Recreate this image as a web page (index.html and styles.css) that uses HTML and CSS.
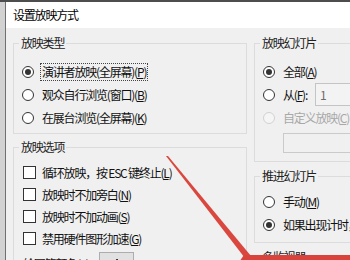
FILE: index.html
```html
<!DOCTYPE html>
<html lang="zh-CN">
<head>
  <meta charset="UTF-8" />
  <title>设置放映方式</title>
  <link rel="stylesheet" href="styles.css">
</head>
<body>
<div class="screen">
  <div class="topline"></div>
  <div class="desk">
    <div class="behind"></div>
    <div class="dialog">
      <div class="titlebar">设置放映方式</div>
      <div class="panel">

        <!-- left column -->
        <div class="col">
          <fieldset class="group g-type">
            <legend>放映类型</legend>
            <div class="opt"><span class="radio on"></span><span class="focus">演讲者放映(全屏幕)(<u>P</u>)</span></div>
            <div class="opt"><span class="radio"></span>观众自行浏览(窗口)(<u>B</u>)</div>
            <div class="opt"><span class="radio"></span>在展台浏览(全屏幕)(<u>K</u>)</div>
          </fieldset>

          <fieldset class="group g-options">
            <legend>放映选项</legend>
            <div class="opt"><span class="check"></span>循环放映，按 ESC 键终止(<u>L</u>)</div>
            <div class="opt"><span class="check"></span>放映时不加旁白(<u>N</u>)</div>
            <div class="opt"><span class="check"></span>放映时不加动画(<u>S</u>)</div>
            <div class="opt"><span class="check"></span>禁用硬件图形加速(<u>G</u>)</div>
            <div class="pen-row">
              <span>绘图笔颜色(<u>E</u>):</span>
              <button class="color-btn" type="button">
                <svg width="14" height="12" viewBox="0 0 14 12">
                  <path d="M3 8 L8 2 L10 4 L5 10 Z" fill="none" stroke="#333" stroke-width="1"/>
                  <path d="M10 9 L13 9 L11.5 11 Z" fill="#333"/>
                </svg>
              </button>
            </div>
          </fieldset>
        </div>

        <!-- right column -->
        <div class="col">
          <fieldset class="group g-slides">
            <legend>放映幻灯片</legend>
            <div class="opt"><span class="radio on"></span>全部(<u>A</u>)</div>
            <div class="opt"><span class="radio"></span>从(<u>F</u>):<span class="num-box">1</span></div>
            <div class="opt disabled"><span class="radio"></span>自定义放映(<u>C</u>)</div>
            <div class="combo"></div>
          </fieldset>

          <fieldset class="group g-advance">
            <legend>推进幻灯片</legend>
            <div class="opt"><span class="radio"></span>手动(<u>M</u>)</div>
            <div class="opt"><span class="radio on"></span>如果出现计时，则使用它(<u>U</u>)</div>
          </fieldset>

          <fieldset class="group g-monitor">
            <legend>多监视器</legend>
            <div class="opt">幻灯片放映监视器(<u>O</u>):</div>
          </fieldset>
        </div>

      </div>
    </div>
  </div>

  <!-- red annotation arrow drawn over the screenshot -->
  <svg class="arrow" width="350" height="260" viewBox="0 0 350 260">
    <polygon points="166,156 168,156 256,262 248,262" fill="#d9473e"/>
    <polygon points="239,262 244,255 352,255 352,262" fill="#d8443b"/>
  </svg>
</div>
</body>
</html>
```

FILE: styles.css
```css
* {
  box-sizing: border-box;
}
body {
  margin: 0;
  width: 350px;
  height: 260px;
  overflow: hidden;
  background: #f0f0f0;
  font-family: "Noto Sans CJK SC", "Liberation Sans", sans-serif;
  font-size: 12px;
  letter-spacing: -1.2px;
  color: #111;
}
.screen {
  position: relative;
  width: 350px;
  height: 260px;
  overflow: hidden;
}
.topline {
  height: 2px;
  background: #4d4d4d;
}
.desk {
  display: flex;
  height: 258px;
}
.behind {
  width: 6px;
  flex: none;
  background: #d2d2d2;
  border-right: 1px solid #707070;
}
.dialog {
  flex: 1;
  min-width: 0;
  display: flex;
  flex-direction: column;
}
.titlebar {
  height: 26px;
  line-height: 26px;
  padding-left: 7px;
  background: #fff;
  color: #000;
}
.panel {
  flex: 1;
  background: #f0f0f0;
  padding: 7px 0 0 7px;
  display: grid;
  grid-template-columns: 234px 130px;
  column-gap: 7px;
  align-items: start;
}

/* group boxes */
.group {
  margin: 0;
  min-width: 0;
  border: 1px solid #dcdcdc;
  padding: 9px 8px 4px 5px;
}
.group legend {
  padding: 0 2px;
  line-height: 16px;
  color: #222;
}
.g-options {
  margin-top: 5px;
  padding-top: 6px;
  padding-bottom: 10px;
}
.g-slides {
  padding-bottom: 8px;
}
.g-advance {
  margin-top: 6px;
  padding-top: 6px;
  padding-bottom: 6px;
}
.g-monitor {
  margin-top: 6px;
  padding-top: 6px;
}

/* rows */
.opt {
  display: flex;
  align-items: center;
  height: 23px;
  padding-left: 3px;
  white-space: nowrap;
}
.g-options .opt {
  height: 22px;
  padding-left: 4px;
}
.opt u {
  text-decoration: underline;
  text-underline-offset: 1px;
}
.radio {
  width: 12px;
  height: 12px;
  flex: none;
  margin-right: 8px;
  border: 1px solid #333;
  border-radius: 50%;
  background: #fff;
  display: flex;
  align-items: center;
  justify-content: center;
}
.radio.on::after {
  content: "";
  width: 6px;
  height: 6px;
  border-radius: 50%;
  background: #333;
}
.focus {
  margin-left: -2px;
  padding: 0 1px;
  border: 1px dotted #444;
  line-height: 16px;
}
.check {
  width: 13px;
  height: 13px;
  flex: none;
  margin-right: 6px;
  border: 1px solid #333;
  background: #fff;
}
.disabled {
  color: #a8a8a8;
}
.disabled .radio {
  border-color: #d2d2d2;
  background: #f5f5f5;
}
.num-box {
  width: 70px;
  height: 23px;
  margin-left: 8px;
  padding-left: 4px;
  line-height: 21px;
  border: 1px solid #c4c4c4;
  background: #f3f3f3;
  color: #6d6d6d;
}
.combo {
  height: 20px;
  margin: 4px 0 0 23px;
  border: 1px solid #cacaca;
  background: #f0f0f0;
}

/* pen colour row */
.pen-row {
  display: flex;
  align-items: flex-start;
  height: 28px;
  margin-top: 3px;
  padding-left: 4px;
  line-height: 24px;
}
.color-btn {
  width: 35px;
  height: 24px;
  margin-left: 8px;
  padding: 0;
  border: 1px solid #adadad;
  background: #e1e1e1;
}

.arrow {
  position: absolute;
  left: 0;
  top: 0;
  pointer-events: none;
}
```
